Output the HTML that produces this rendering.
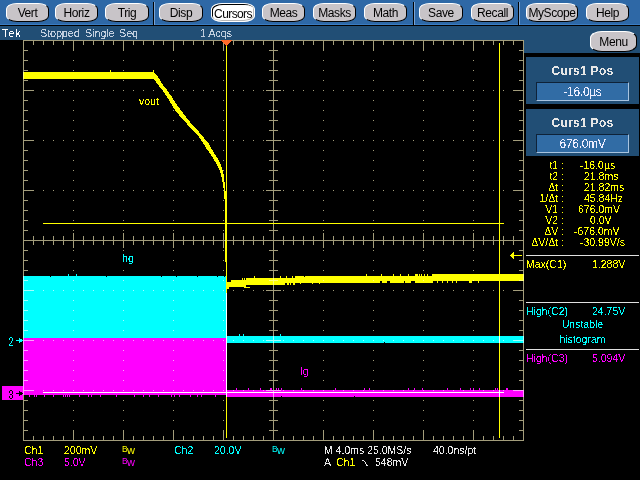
<!DOCTYPE html>
<html><head><meta charset="utf-8">
<style>
*{margin:0;padding:0;box-sizing:border-box}
html,body{width:640px;height:480px;overflow:hidden;background:#000}
body{position:relative;font-family:"Liberation Sans",sans-serif}
.a{position:absolute;white-space:nowrap}
#tb{position:absolute;left:0;top:0;width:640px;height:24px;background:#2e68a6}
#tbl{position:absolute;left:0;top:24px;width:640px;height:2px;border-top:1px solid #3a7cc2;background:#000}
#st{position:absolute;left:0;top:26px;width:640px;height:14px;background:#214e75}
#stR{position:absolute;left:524px;top:40px;width:116px;height:13px;background:#214e75}
.btn{position:absolute;top:3px;height:19px;background:#c8c4c8;border:1px solid;border-color:#fff #000 #000 #fff;border-radius:11px/6px;font-size:12px;color:#000;text-align:center;line-height:19px;letter-spacing:-0.4px}
.btn.sel{background:#fff;border-color:#fff;box-shadow:inset 1px 1px 0 #000, inset -1px -1px 0 #b8b8b8;line-height:21px;letter-spacing:-0.6px}
.t{}
.cr{filter:url(#crisp)}
.sep{position:absolute;top:2px;width:2px;height:23px;border-left:1px solid #000;background:#7aa4d4;border-bottom:0}
.panel{position:absolute;left:526px;width:113px;height:47px;background:#214e75}
.ptitle{filter:url(#crisp);position:absolute;left:0;width:113px;top:7px;text-align:center;font-weight:bold;font-size:12px;color:#e6e6e6;letter-spacing:0.3px}
.pbox{position:absolute;left:10px;top:25px;width:93px;height:19px;background:#316ca5;border:1px solid;border-color:#0e2238 #a8c4e0 #a8c4e0 #0e2238;color:#eef;font-size:12px;text-align:center;line-height:19px;letter-spacing:-0.3px}
.y{color:#ffff00} .c{color:#00ffff} .m{color:#ff00ff} .w{color:#e8e8e8}
.ro{font-size:10.5px;line-height:11px;filter:url(#crisp)}
.st{top:26px;font-size:11px;line-height:14px;color:#c0cede;letter-spacing:-0.2px;filter:url(#crisp)}
</style></head><body>
<svg width="0" height="0" style="position:absolute"><filter id="crisp" x="0" y="0" width="100%" height="100%"><feComponentTransfer><feFuncA type="discrete" tableValues="0 1"/></feComponentTransfer></filter></svg>
<div id="tb"></div><div id="tbl"></div><div id="st"></div><div id="stR"></div>
<div class="btn" style="left:6px;width:43px"><span class="t">Vert</span></div>
<div class="btn" style="left:55px;width:43px"><span class="t">Horiz</span></div>
<div class="btn" style="left:105px;width:44px"><span class="t">Trig</span></div>
<div class="sep" style="left:153px"></div>
<div class="btn" style="left:159px;width:44px"><span class="t">Disp</span></div>
<div class="btn sel" style="left:211px;width:44px"><span class="t">Cursors</span></div>
<div class="btn" style="left:262px;width:43px"><span class="t">Meas</span></div>
<div class="btn" style="left:313px;width:43px"><span class="t">Masks</span></div>
<div class="btn" style="left:364px;width:43px"><span class="t">Math</span></div>
<div class="sep" style="left:413px"></div>
<div class="btn" style="left:419px;width:44px"><span class="t">Save</span></div>
<div class="btn" style="left:471px;width:43px"><span class="t">Recall</span></div>
<div class="sep" style="left:518px"></div>
<div class="btn" style="left:526px;width:52px"><span class="t">MyScope</span></div>
<div class="btn" style="left:586px;width:43px"><span class="t">Help</span></div>
<div class="btn" style="left:590px;top:31px;width:47px;height:21px;line-height:21px;border-radius:12px/7px"><span class="t">Menu</span></div>

<div class="a" style="left:2px;top:26px;font-size:11px;line-height:14px;color:#fff;letter-spacing:0.8px;filter:url(#crisp)">Tek</div>
<div class="a st" style="left:40px">Stopped</div>
<div class="a st" style="left:85px">Single</div>
<div class="a st" style="left:119px">Seq</div>
<div class="a st" style="left:200px">1 Acqs</div>

<div class="panel" style="top:57px"><div class="ptitle">Curs1 Pos</div><div class="pbox"><span class="cr">-16.0µs</span></div></div>
<div class="panel" style="top:109px"><div class="ptitle">Curs1 Pos</div><div class="pbox"><span class="cr">676.0mV</span></div></div>

<svg class="a" style="left:0;top:0" width="640" height="480" shape-rendering="crispEdges">
 <g fill="#ffff00">
  <rect x="23" y="72" width="131" height="7"/>
  <polygon points="153,79 154,80 156,82 159,86 162.4,90 166.4,96 170.75,103 174.8,110 180.7,117 187,124 193.5,131 199.9,138 203.6,144 206.8,149 210.4,154 213.5,159 216.6,164 219.1,169 221,174 222,179 222.9,184 223.75,189 224.1,194 224.5,199 225,203 225,262 226,262 226,293 227,293 227,192 225.6,192 225.3,189 224.9,184 224.1,179 223.5,174 222.25,169 220.4,164 217.9,159 214.75,154 211.6,149 209.2,144 204,138 198.2,131 191.75,124 185.9,117 180.7,110 175.4,103 171.3,96 167,90 163,85 160,80 158,77 155.8,74 154,72 153,72"/>
  <rect x="153" y="70" width="1" height="2"/><rect x="110" y="70" width="1" height="2"/>
 </g>
 <rect x="23" y="276" width="203" height="62" fill="#00ffff"/>
 <rect x="226" y="293" width="1" height="45" fill="#00ffff"/>
 <rect x="226" y="336" width="298" height="7" fill="#00ffff"/>
 <rect x="23" y="338" width="204" height="57" fill="#ff00ff"/>
 <rect x="226" y="390" width="298" height="7" fill="#ff00ff"/>
 <g fill="#ffff00">
  <rect x="227" y="282" width="2" height="7"/>
  <rect x="229" y="282" width="2" height="5"/>
  <rect x="231" y="280" width="15" height="7"/><rect x="244" y="287" width="6" height="1"/><rect x="246" y="278" width="39" height="7"/><rect x="285" y="278" width="10" height="5"/><rect x="295" y="276" width="137" height="7"/><rect x="432" y="274" width="92" height="7"/>
<rect x="50" y="276" width="1" height="1" fill="#000"/>
<rect x="106" y="276" width="1" height="1" fill="#000"/>
<rect x="161" y="276" width="1" height="1" fill="#000"/>
<rect x="176" y="276" width="1" height="1" fill="#000"/>
<rect x="197" y="276" width="1" height="1" fill="#000"/>
<rect x="217" y="276" width="1" height="1" fill="#000"/>
<rect x="224" y="276" width="1" height="1" fill="#000"/>
<rect x="68" y="274" width="1" height="2" fill="#00ffff"/>
<rect x="76" y="274" width="1" height="2" fill="#00ffff"/>
<rect x="239" y="334" width="1" height="2" fill="#00ffff"/>
<rect x="243" y="334" width="1" height="2" fill="#00ffff"/>
<rect x="280" y="334" width="1" height="2" fill="#00ffff"/>
<rect x="384" y="342" width="1" height="1" fill="#000"/>
<rect x="29" y="395" width="1" height="2" fill="#ff00ff"/>
<rect x="34" y="395" width="1" height="2" fill="#ff00ff"/>
<rect x="36" y="395" width="1" height="2" fill="#ff00ff"/>
<rect x="44" y="395" width="1" height="2" fill="#ff00ff"/>
<rect x="53" y="395" width="1" height="2" fill="#ff00ff"/>
<rect x="63" y="395" width="1" height="2" fill="#ff00ff"/>
<rect x="65" y="395" width="1" height="2" fill="#ff00ff"/>
<rect x="67" y="395" width="1" height="2" fill="#ff00ff"/>
<rect x="69" y="395" width="1" height="2" fill="#ff00ff"/>
<rect x="79" y="395" width="1" height="2" fill="#ff00ff"/>
<rect x="88" y="395" width="1" height="2" fill="#ff00ff"/>
<rect x="91" y="395" width="1" height="2" fill="#ff00ff"/>
<rect x="100" y="395" width="1" height="2" fill="#ff00ff"/>
<rect x="116" y="395" width="1" height="2" fill="#ff00ff"/>
<rect x="134" y="395" width="1" height="2" fill="#ff00ff"/>
<rect x="143" y="395" width="1" height="2" fill="#ff00ff"/>
<rect x="149" y="395" width="1" height="2" fill="#ff00ff"/>
<rect x="158" y="395" width="1" height="2" fill="#ff00ff"/>
<rect x="171" y="395" width="1" height="2" fill="#ff00ff"/>
<rect x="174" y="395" width="1" height="2" fill="#ff00ff"/>
<rect x="179" y="395" width="1" height="2" fill="#ff00ff"/>
<rect x="190" y="395" width="1" height="2" fill="#ff00ff"/>
<rect x="197" y="395" width="1" height="2" fill="#ff00ff"/>
<rect x="201" y="395" width="1" height="2" fill="#ff00ff"/>
<rect x="215" y="395" width="1" height="2" fill="#ff00ff"/>
<rect x="236" y="388" width="1" height="2" fill="#ff00ff"/>
<rect x="248" y="388" width="1" height="2" fill="#ff00ff"/>
<rect x="260" y="388" width="1" height="2" fill="#ff00ff"/>
<rect x="270" y="388" width="1" height="2" fill="#ff00ff"/>
<rect x="271" y="388" width="1" height="2" fill="#ff00ff"/>
<rect x="276" y="388" width="1" height="2" fill="#ff00ff"/>
<rect x="278" y="388" width="1" height="2" fill="#ff00ff"/>
<rect x="281" y="388" width="1" height="2" fill="#ff00ff"/>
<rect x="301" y="388" width="1" height="2" fill="#ff00ff"/>
<rect x="335" y="388" width="1" height="2" fill="#ff00ff"/>
<rect x="364" y="388" width="1" height="2" fill="#ff00ff"/>
<rect x="369" y="388" width="1" height="2" fill="#ff00ff"/>
<rect x="408" y="388" width="1" height="2" fill="#ff00ff"/>
<rect x="414" y="388" width="1" height="2" fill="#ff00ff"/>
<rect x="422" y="388" width="1" height="2" fill="#ff00ff"/>
<rect x="447" y="388" width="1" height="2" fill="#ff00ff"/>
<rect x="460" y="388" width="1" height="2" fill="#ff00ff"/>
<rect x="470" y="388" width="1" height="2" fill="#ff00ff"/>
<rect x="473" y="388" width="1" height="2" fill="#ff00ff"/>
<rect x="479" y="388" width="1" height="2" fill="#ff00ff"/>
<rect x="495" y="388" width="1" height="2" fill="#ff00ff"/>
<rect x="497" y="388" width="1" height="2" fill="#ff00ff"/>
<rect x="506" y="388" width="1" height="2" fill="#ff00ff"/>
<rect x="507" y="388" width="1" height="2" fill="#ff00ff"/>
<rect x="281" y="396" width="1" height="1" fill="#000"/>
<rect x="354" y="396" width="1" height="1" fill="#000"/>
<rect x="242" y="278" width="1" height="2" fill="#ffff00"/>
<rect x="244" y="278" width="1" height="2" fill="#ffff00"/>
<rect x="254" y="276" width="1" height="2" fill="#ffff00"/>
<rect x="280" y="276" width="1" height="2" fill="#ffff00"/>
<rect x="286" y="276" width="1" height="2" fill="#ffff00"/>
<rect x="292" y="276" width="1" height="2" fill="#ffff00"/>
<rect x="366" y="274" width="1" height="2" fill="#ffff00"/>
<rect x="381" y="274" width="1" height="2" fill="#ffff00"/>
<rect x="393" y="274" width="1" height="2" fill="#ffff00"/>
<rect x="400" y="274" width="1" height="2" fill="#ffff00"/>
<rect x="408" y="274" width="1" height="2" fill="#ffff00"/>
<rect x="415" y="274" width="1" height="2" fill="#ffff00"/>
<rect x="417" y="274" width="1" height="2" fill="#ffff00"/>
<rect x="416" y="274" width="1" height="2" fill="#ffff00"/>
<rect x="419" y="274" width="1" height="2" fill="#ffff00"/>
<rect x="421" y="274" width="1" height="2" fill="#ffff00"/>
<rect x="424" y="274" width="1" height="2" fill="#ffff00"/>
<rect x="427" y="274" width="1" height="2" fill="#ffff00"/>
<rect x="304" y="276" width="1" height="1" fill="#000"/>
<rect x="287" y="283" width="1" height="2" fill="#ffff00"/>
<rect x="288" y="283" width="1" height="2" fill="#ffff00"/>
<rect x="290" y="283" width="1" height="2" fill="#ffff00"/>
<rect x="293" y="283" width="1" height="2" fill="#ffff00"/>
<rect x="294" y="283" width="1" height="2" fill="#ffff00"/>
<rect x="300" y="283" width="1" height="1" fill="#ffff00"/>
<rect x="312" y="283" width="1" height="1" fill="#ffff00"/>
<rect x="319" y="283" width="1" height="1" fill="#ffff00"/>
<rect x="380" y="281" width="1" height="2" fill="#000"/>
<rect x="381" y="281" width="1" height="2" fill="#000"/>
<rect x="387" y="281" width="1" height="2" fill="#000"/>
<rect x="388" y="281" width="1" height="2" fill="#000"/>
<rect x="389" y="281" width="1" height="2" fill="#000"/>
<rect x="404" y="281" width="1" height="2" fill="#000"/>
<rect x="411" y="281" width="1" height="2" fill="#000"/>
<rect x="412" y="281" width="1" height="2" fill="#000"/>
<rect x="413" y="281" width="1" height="2" fill="#000"/>
<rect x="414" y="281" width="1" height="2" fill="#000"/>
<rect x="420" y="281" width="1" height="2" fill="#ffff00"/>
<rect x="424" y="281" width="1" height="2" fill="#ffff00"/>
<rect x="428" y="281" width="1" height="2" fill="#ffff00"/>
<rect x="432" y="281" width="1" height="2" fill="#ffff00"/>
<rect x="437" y="281" width="1" height="2" fill="#ffff00"/>
<rect x="442" y="281" width="1" height="2" fill="#ffff00"/>
<rect x="447" y="281" width="1" height="2" fill="#ffff00"/>
<rect x="452" y="281" width="1" height="2" fill="#ffff00"/>
<rect x="456" y="281" width="1" height="2" fill="#ffff00"/>
<rect x="469" y="281" width="1" height="2" fill="#ffff00"/>
<rect x="470" y="281" width="1" height="2" fill="#ffff00"/>
<rect x="471" y="281" width="1" height="2" fill="#ffff00"/>
<rect x="478" y="281" width="1" height="2" fill="#ffff00"/>
 </g>
</svg>
<svg class="a" style="left:0;top:0;mix-blend-mode:screen" width="640" height="480" shape-rendering="crispEdges">
 <g fill="#a39d7b">
<rect x="23" y="40" width="501" height="1"/>
<rect x="23" y="440" width="501" height="1"/>
<rect x="23" y="40" width="1" height="401"/>
<rect x="523" y="40" width="1" height="401"/>
<rect x="273" y="40" width="1" height="401"/>
<rect x="23" y="240" width="501" height="1"/>
<rect x="33" y="40" width="1" height="5"/>
<rect x="33" y="436" width="1" height="5"/>
<rect x="33" y="236" width="1" height="9"/>
<rect x="43" y="40" width="1" height="5"/>
<rect x="43" y="436" width="1" height="5"/>
<rect x="43" y="236" width="1" height="9"/>
<rect x="53" y="40" width="1" height="5"/>
<rect x="53" y="436" width="1" height="5"/>
<rect x="53" y="236" width="1" height="9"/>
<rect x="63" y="40" width="1" height="5"/>
<rect x="63" y="436" width="1" height="5"/>
<rect x="63" y="236" width="1" height="9"/>
<rect x="73" y="40" width="1" height="11"/>
<rect x="73" y="430" width="1" height="11"/>
<rect x="73" y="233" width="1" height="15"/>
<rect x="83" y="40" width="1" height="5"/>
<rect x="83" y="436" width="1" height="5"/>
<rect x="83" y="236" width="1" height="9"/>
<rect x="93" y="40" width="1" height="5"/>
<rect x="93" y="436" width="1" height="5"/>
<rect x="93" y="236" width="1" height="9"/>
<rect x="103" y="40" width="1" height="5"/>
<rect x="103" y="436" width="1" height="5"/>
<rect x="103" y="236" width="1" height="9"/>
<rect x="113" y="40" width="1" height="5"/>
<rect x="113" y="436" width="1" height="5"/>
<rect x="113" y="236" width="1" height="9"/>
<rect x="123" y="40" width="1" height="11"/>
<rect x="123" y="430" width="1" height="11"/>
<rect x="123" y="233" width="1" height="15"/>
<rect x="133" y="40" width="1" height="5"/>
<rect x="133" y="436" width="1" height="5"/>
<rect x="133" y="236" width="1" height="9"/>
<rect x="143" y="40" width="1" height="5"/>
<rect x="143" y="436" width="1" height="5"/>
<rect x="143" y="236" width="1" height="9"/>
<rect x="153" y="40" width="1" height="5"/>
<rect x="153" y="436" width="1" height="5"/>
<rect x="153" y="236" width="1" height="9"/>
<rect x="163" y="40" width="1" height="5"/>
<rect x="163" y="436" width="1" height="5"/>
<rect x="163" y="236" width="1" height="9"/>
<rect x="173" y="40" width="1" height="11"/>
<rect x="173" y="430" width="1" height="11"/>
<rect x="173" y="233" width="1" height="15"/>
<rect x="183" y="40" width="1" height="5"/>
<rect x="183" y="436" width="1" height="5"/>
<rect x="183" y="236" width="1" height="9"/>
<rect x="193" y="40" width="1" height="5"/>
<rect x="193" y="436" width="1" height="5"/>
<rect x="193" y="236" width="1" height="9"/>
<rect x="203" y="40" width="1" height="5"/>
<rect x="203" y="436" width="1" height="5"/>
<rect x="203" y="236" width="1" height="9"/>
<rect x="213" y="40" width="1" height="5"/>
<rect x="213" y="436" width="1" height="5"/>
<rect x="213" y="236" width="1" height="9"/>
<rect x="223" y="40" width="1" height="11"/>
<rect x="223" y="430" width="1" height="11"/>
<rect x="223" y="233" width="1" height="15"/>
<rect x="233" y="40" width="1" height="5"/>
<rect x="233" y="436" width="1" height="5"/>
<rect x="233" y="236" width="1" height="9"/>
<rect x="243" y="40" width="1" height="5"/>
<rect x="243" y="436" width="1" height="5"/>
<rect x="243" y="236" width="1" height="9"/>
<rect x="253" y="40" width="1" height="5"/>
<rect x="253" y="436" width="1" height="5"/>
<rect x="253" y="236" width="1" height="9"/>
<rect x="263" y="40" width="1" height="5"/>
<rect x="263" y="436" width="1" height="5"/>
<rect x="263" y="236" width="1" height="9"/>
<rect x="283" y="40" width="1" height="5"/>
<rect x="283" y="436" width="1" height="5"/>
<rect x="283" y="236" width="1" height="9"/>
<rect x="293" y="40" width="1" height="5"/>
<rect x="293" y="436" width="1" height="5"/>
<rect x="293" y="236" width="1" height="9"/>
<rect x="303" y="40" width="1" height="5"/>
<rect x="303" y="436" width="1" height="5"/>
<rect x="303" y="236" width="1" height="9"/>
<rect x="313" y="40" width="1" height="5"/>
<rect x="313" y="436" width="1" height="5"/>
<rect x="313" y="236" width="1" height="9"/>
<rect x="323" y="40" width="1" height="11"/>
<rect x="323" y="430" width="1" height="11"/>
<rect x="323" y="233" width="1" height="15"/>
<rect x="333" y="40" width="1" height="5"/>
<rect x="333" y="436" width="1" height="5"/>
<rect x="333" y="236" width="1" height="9"/>
<rect x="343" y="40" width="1" height="5"/>
<rect x="343" y="436" width="1" height="5"/>
<rect x="343" y="236" width="1" height="9"/>
<rect x="353" y="40" width="1" height="5"/>
<rect x="353" y="436" width="1" height="5"/>
<rect x="353" y="236" width="1" height="9"/>
<rect x="363" y="40" width="1" height="5"/>
<rect x="363" y="436" width="1" height="5"/>
<rect x="363" y="236" width="1" height="9"/>
<rect x="373" y="40" width="1" height="11"/>
<rect x="373" y="430" width="1" height="11"/>
<rect x="373" y="233" width="1" height="15"/>
<rect x="383" y="40" width="1" height="5"/>
<rect x="383" y="436" width="1" height="5"/>
<rect x="383" y="236" width="1" height="9"/>
<rect x="393" y="40" width="1" height="5"/>
<rect x="393" y="436" width="1" height="5"/>
<rect x="393" y="236" width="1" height="9"/>
<rect x="403" y="40" width="1" height="5"/>
<rect x="403" y="436" width="1" height="5"/>
<rect x="403" y="236" width="1" height="9"/>
<rect x="413" y="40" width="1" height="5"/>
<rect x="413" y="436" width="1" height="5"/>
<rect x="413" y="236" width="1" height="9"/>
<rect x="423" y="40" width="1" height="11"/>
<rect x="423" y="430" width="1" height="11"/>
<rect x="423" y="233" width="1" height="15"/>
<rect x="433" y="40" width="1" height="5"/>
<rect x="433" y="436" width="1" height="5"/>
<rect x="433" y="236" width="1" height="9"/>
<rect x="443" y="40" width="1" height="5"/>
<rect x="443" y="436" width="1" height="5"/>
<rect x="443" y="236" width="1" height="9"/>
<rect x="453" y="40" width="1" height="5"/>
<rect x="453" y="436" width="1" height="5"/>
<rect x="453" y="236" width="1" height="9"/>
<rect x="463" y="40" width="1" height="5"/>
<rect x="463" y="436" width="1" height="5"/>
<rect x="463" y="236" width="1" height="9"/>
<rect x="473" y="40" width="1" height="11"/>
<rect x="473" y="430" width="1" height="11"/>
<rect x="473" y="233" width="1" height="15"/>
<rect x="483" y="40" width="1" height="5"/>
<rect x="483" y="436" width="1" height="5"/>
<rect x="483" y="236" width="1" height="9"/>
<rect x="493" y="40" width="1" height="5"/>
<rect x="493" y="436" width="1" height="5"/>
<rect x="493" y="236" width="1" height="9"/>
<rect x="503" y="40" width="1" height="5"/>
<rect x="503" y="436" width="1" height="5"/>
<rect x="503" y="236" width="1" height="9"/>
<rect x="513" y="40" width="1" height="5"/>
<rect x="513" y="436" width="1" height="5"/>
<rect x="513" y="236" width="1" height="9"/>
<rect x="23" y="50" width="5" height="1"/>
<rect x="519" y="50" width="5" height="1"/>
<rect x="269" y="50" width="9" height="1"/>
<rect x="23" y="60" width="5" height="1"/>
<rect x="519" y="60" width="5" height="1"/>
<rect x="269" y="60" width="9" height="1"/>
<rect x="23" y="70" width="5" height="1"/>
<rect x="519" y="70" width="5" height="1"/>
<rect x="269" y="70" width="9" height="1"/>
<rect x="23" y="80" width="5" height="1"/>
<rect x="519" y="80" width="5" height="1"/>
<rect x="269" y="80" width="9" height="1"/>
<rect x="23" y="90" width="11" height="1"/>
<rect x="513" y="90" width="11" height="1"/>
<rect x="266" y="90" width="15" height="1"/>
<rect x="23" y="100" width="5" height="1"/>
<rect x="519" y="100" width="5" height="1"/>
<rect x="269" y="100" width="9" height="1"/>
<rect x="23" y="110" width="5" height="1"/>
<rect x="519" y="110" width="5" height="1"/>
<rect x="269" y="110" width="9" height="1"/>
<rect x="23" y="120" width="5" height="1"/>
<rect x="519" y="120" width="5" height="1"/>
<rect x="269" y="120" width="9" height="1"/>
<rect x="23" y="130" width="5" height="1"/>
<rect x="519" y="130" width="5" height="1"/>
<rect x="269" y="130" width="9" height="1"/>
<rect x="23" y="140" width="11" height="1"/>
<rect x="513" y="140" width="11" height="1"/>
<rect x="266" y="140" width="15" height="1"/>
<rect x="23" y="150" width="5" height="1"/>
<rect x="519" y="150" width="5" height="1"/>
<rect x="269" y="150" width="9" height="1"/>
<rect x="23" y="160" width="5" height="1"/>
<rect x="519" y="160" width="5" height="1"/>
<rect x="269" y="160" width="9" height="1"/>
<rect x="23" y="170" width="5" height="1"/>
<rect x="519" y="170" width="5" height="1"/>
<rect x="269" y="170" width="9" height="1"/>
<rect x="23" y="180" width="5" height="1"/>
<rect x="519" y="180" width="5" height="1"/>
<rect x="269" y="180" width="9" height="1"/>
<rect x="23" y="190" width="11" height="1"/>
<rect x="513" y="190" width="11" height="1"/>
<rect x="266" y="190" width="15" height="1"/>
<rect x="23" y="200" width="5" height="1"/>
<rect x="519" y="200" width="5" height="1"/>
<rect x="269" y="200" width="9" height="1"/>
<rect x="23" y="210" width="5" height="1"/>
<rect x="519" y="210" width="5" height="1"/>
<rect x="269" y="210" width="9" height="1"/>
<rect x="23" y="220" width="5" height="1"/>
<rect x="519" y="220" width="5" height="1"/>
<rect x="269" y="220" width="9" height="1"/>
<rect x="23" y="230" width="5" height="1"/>
<rect x="519" y="230" width="5" height="1"/>
<rect x="269" y="230" width="9" height="1"/>
<rect x="23" y="250" width="5" height="1"/>
<rect x="519" y="250" width="5" height="1"/>
<rect x="269" y="250" width="9" height="1"/>
<rect x="23" y="260" width="5" height="1"/>
<rect x="519" y="260" width="5" height="1"/>
<rect x="269" y="260" width="9" height="1"/>
<rect x="23" y="270" width="5" height="1"/>
<rect x="519" y="270" width="5" height="1"/>
<rect x="269" y="270" width="9" height="1"/>
<rect x="23" y="280" width="5" height="1"/>
<rect x="519" y="280" width="5" height="1"/>
<rect x="269" y="280" width="9" height="1"/>
<rect x="23" y="290" width="11" height="1"/>
<rect x="513" y="290" width="11" height="1"/>
<rect x="266" y="290" width="15" height="1"/>
<rect x="23" y="300" width="5" height="1"/>
<rect x="519" y="300" width="5" height="1"/>
<rect x="269" y="300" width="9" height="1"/>
<rect x="23" y="310" width="5" height="1"/>
<rect x="519" y="310" width="5" height="1"/>
<rect x="269" y="310" width="9" height="1"/>
<rect x="23" y="320" width="5" height="1"/>
<rect x="519" y="320" width="5" height="1"/>
<rect x="269" y="320" width="9" height="1"/>
<rect x="23" y="330" width="5" height="1"/>
<rect x="519" y="330" width="5" height="1"/>
<rect x="269" y="330" width="9" height="1"/>
<rect x="23" y="340" width="11" height="1"/>
<rect x="513" y="340" width="11" height="1"/>
<rect x="266" y="340" width="15" height="1"/>
<rect x="23" y="350" width="5" height="1"/>
<rect x="519" y="350" width="5" height="1"/>
<rect x="269" y="350" width="9" height="1"/>
<rect x="23" y="360" width="5" height="1"/>
<rect x="519" y="360" width="5" height="1"/>
<rect x="269" y="360" width="9" height="1"/>
<rect x="23" y="370" width="5" height="1"/>
<rect x="519" y="370" width="5" height="1"/>
<rect x="269" y="370" width="9" height="1"/>
<rect x="23" y="380" width="5" height="1"/>
<rect x="519" y="380" width="5" height="1"/>
<rect x="269" y="380" width="9" height="1"/>
<rect x="23" y="390" width="11" height="1"/>
<rect x="513" y="390" width="11" height="1"/>
<rect x="266" y="390" width="15" height="1"/>
<rect x="23" y="400" width="5" height="1"/>
<rect x="519" y="400" width="5" height="1"/>
<rect x="269" y="400" width="9" height="1"/>
<rect x="23" y="410" width="5" height="1"/>
<rect x="519" y="410" width="5" height="1"/>
<rect x="269" y="410" width="9" height="1"/>
<rect x="23" y="420" width="5" height="1"/>
<rect x="519" y="420" width="5" height="1"/>
<rect x="269" y="420" width="9" height="1"/>
<rect x="23" y="430" width="5" height="1"/>
<rect x="519" y="430" width="5" height="1"/>
<rect x="269" y="430" width="9" height="1"/>
<rect x="73" y="50" width="1" height="1"/>
<rect x="73" y="60" width="1" height="1"/>
<rect x="73" y="70" width="1" height="1"/>
<rect x="73" y="80" width="1" height="1"/>
<rect x="73" y="100" width="1" height="1"/>
<rect x="73" y="110" width="1" height="1"/>
<rect x="73" y="120" width="1" height="1"/>
<rect x="73" y="130" width="1" height="1"/>
<rect x="73" y="150" width="1" height="1"/>
<rect x="73" y="160" width="1" height="1"/>
<rect x="73" y="170" width="1" height="1"/>
<rect x="73" y="180" width="1" height="1"/>
<rect x="73" y="200" width="1" height="1"/>
<rect x="73" y="210" width="1" height="1"/>
<rect x="73" y="220" width="1" height="1"/>
<rect x="73" y="230" width="1" height="1"/>
<rect x="73" y="250" width="1" height="1"/>
<rect x="73" y="260" width="1" height="1"/>
<rect x="73" y="270" width="1" height="1"/>
<rect x="73" y="280" width="1" height="1"/>
<rect x="73" y="300" width="1" height="1"/>
<rect x="73" y="310" width="1" height="1"/>
<rect x="73" y="320" width="1" height="1"/>
<rect x="73" y="330" width="1" height="1"/>
<rect x="73" y="350" width="1" height="1"/>
<rect x="73" y="360" width="1" height="1"/>
<rect x="73" y="370" width="1" height="1"/>
<rect x="73" y="380" width="1" height="1"/>
<rect x="73" y="400" width="1" height="1"/>
<rect x="73" y="410" width="1" height="1"/>
<rect x="73" y="420" width="1" height="1"/>
<rect x="73" y="430" width="1" height="1"/>
<rect x="123" y="50" width="1" height="1"/>
<rect x="123" y="60" width="1" height="1"/>
<rect x="123" y="70" width="1" height="1"/>
<rect x="123" y="80" width="1" height="1"/>
<rect x="123" y="100" width="1" height="1"/>
<rect x="123" y="110" width="1" height="1"/>
<rect x="123" y="120" width="1" height="1"/>
<rect x="123" y="130" width="1" height="1"/>
<rect x="123" y="150" width="1" height="1"/>
<rect x="123" y="160" width="1" height="1"/>
<rect x="123" y="170" width="1" height="1"/>
<rect x="123" y="180" width="1" height="1"/>
<rect x="123" y="200" width="1" height="1"/>
<rect x="123" y="210" width="1" height="1"/>
<rect x="123" y="220" width="1" height="1"/>
<rect x="123" y="230" width="1" height="1"/>
<rect x="123" y="250" width="1" height="1"/>
<rect x="123" y="260" width="1" height="1"/>
<rect x="123" y="270" width="1" height="1"/>
<rect x="123" y="280" width="1" height="1"/>
<rect x="123" y="300" width="1" height="1"/>
<rect x="123" y="310" width="1" height="1"/>
<rect x="123" y="320" width="1" height="1"/>
<rect x="123" y="330" width="1" height="1"/>
<rect x="123" y="350" width="1" height="1"/>
<rect x="123" y="360" width="1" height="1"/>
<rect x="123" y="370" width="1" height="1"/>
<rect x="123" y="380" width="1" height="1"/>
<rect x="123" y="400" width="1" height="1"/>
<rect x="123" y="410" width="1" height="1"/>
<rect x="123" y="420" width="1" height="1"/>
<rect x="123" y="430" width="1" height="1"/>
<rect x="173" y="50" width="1" height="1"/>
<rect x="173" y="60" width="1" height="1"/>
<rect x="173" y="70" width="1" height="1"/>
<rect x="173" y="80" width="1" height="1"/>
<rect x="173" y="100" width="1" height="1"/>
<rect x="173" y="110" width="1" height="1"/>
<rect x="173" y="120" width="1" height="1"/>
<rect x="173" y="130" width="1" height="1"/>
<rect x="173" y="150" width="1" height="1"/>
<rect x="173" y="160" width="1" height="1"/>
<rect x="173" y="170" width="1" height="1"/>
<rect x="173" y="180" width="1" height="1"/>
<rect x="173" y="200" width="1" height="1"/>
<rect x="173" y="210" width="1" height="1"/>
<rect x="173" y="220" width="1" height="1"/>
<rect x="173" y="230" width="1" height="1"/>
<rect x="173" y="250" width="1" height="1"/>
<rect x="173" y="260" width="1" height="1"/>
<rect x="173" y="270" width="1" height="1"/>
<rect x="173" y="280" width="1" height="1"/>
<rect x="173" y="300" width="1" height="1"/>
<rect x="173" y="310" width="1" height="1"/>
<rect x="173" y="320" width="1" height="1"/>
<rect x="173" y="330" width="1" height="1"/>
<rect x="173" y="350" width="1" height="1"/>
<rect x="173" y="360" width="1" height="1"/>
<rect x="173" y="370" width="1" height="1"/>
<rect x="173" y="380" width="1" height="1"/>
<rect x="173" y="400" width="1" height="1"/>
<rect x="173" y="410" width="1" height="1"/>
<rect x="173" y="420" width="1" height="1"/>
<rect x="173" y="430" width="1" height="1"/>
<rect x="223" y="50" width="1" height="1"/>
<rect x="223" y="60" width="1" height="1"/>
<rect x="223" y="70" width="1" height="1"/>
<rect x="223" y="80" width="1" height="1"/>
<rect x="223" y="100" width="1" height="1"/>
<rect x="223" y="110" width="1" height="1"/>
<rect x="223" y="120" width="1" height="1"/>
<rect x="223" y="130" width="1" height="1"/>
<rect x="223" y="150" width="1" height="1"/>
<rect x="223" y="160" width="1" height="1"/>
<rect x="223" y="170" width="1" height="1"/>
<rect x="223" y="180" width="1" height="1"/>
<rect x="223" y="200" width="1" height="1"/>
<rect x="223" y="210" width="1" height="1"/>
<rect x="223" y="220" width="1" height="1"/>
<rect x="223" y="230" width="1" height="1"/>
<rect x="223" y="250" width="1" height="1"/>
<rect x="223" y="260" width="1" height="1"/>
<rect x="223" y="270" width="1" height="1"/>
<rect x="223" y="280" width="1" height="1"/>
<rect x="223" y="300" width="1" height="1"/>
<rect x="223" y="310" width="1" height="1"/>
<rect x="223" y="320" width="1" height="1"/>
<rect x="223" y="330" width="1" height="1"/>
<rect x="223" y="350" width="1" height="1"/>
<rect x="223" y="360" width="1" height="1"/>
<rect x="223" y="370" width="1" height="1"/>
<rect x="223" y="380" width="1" height="1"/>
<rect x="223" y="400" width="1" height="1"/>
<rect x="223" y="410" width="1" height="1"/>
<rect x="223" y="420" width="1" height="1"/>
<rect x="223" y="430" width="1" height="1"/>
<rect x="323" y="50" width="1" height="1"/>
<rect x="323" y="60" width="1" height="1"/>
<rect x="323" y="70" width="1" height="1"/>
<rect x="323" y="80" width="1" height="1"/>
<rect x="323" y="100" width="1" height="1"/>
<rect x="323" y="110" width="1" height="1"/>
<rect x="323" y="120" width="1" height="1"/>
<rect x="323" y="130" width="1" height="1"/>
<rect x="323" y="150" width="1" height="1"/>
<rect x="323" y="160" width="1" height="1"/>
<rect x="323" y="170" width="1" height="1"/>
<rect x="323" y="180" width="1" height="1"/>
<rect x="323" y="200" width="1" height="1"/>
<rect x="323" y="210" width="1" height="1"/>
<rect x="323" y="220" width="1" height="1"/>
<rect x="323" y="230" width="1" height="1"/>
<rect x="323" y="250" width="1" height="1"/>
<rect x="323" y="260" width="1" height="1"/>
<rect x="323" y="270" width="1" height="1"/>
<rect x="323" y="280" width="1" height="1"/>
<rect x="323" y="300" width="1" height="1"/>
<rect x="323" y="310" width="1" height="1"/>
<rect x="323" y="320" width="1" height="1"/>
<rect x="323" y="330" width="1" height="1"/>
<rect x="323" y="350" width="1" height="1"/>
<rect x="323" y="360" width="1" height="1"/>
<rect x="323" y="370" width="1" height="1"/>
<rect x="323" y="380" width="1" height="1"/>
<rect x="323" y="400" width="1" height="1"/>
<rect x="323" y="410" width="1" height="1"/>
<rect x="323" y="420" width="1" height="1"/>
<rect x="323" y="430" width="1" height="1"/>
<rect x="373" y="50" width="1" height="1"/>
<rect x="373" y="60" width="1" height="1"/>
<rect x="373" y="70" width="1" height="1"/>
<rect x="373" y="80" width="1" height="1"/>
<rect x="373" y="100" width="1" height="1"/>
<rect x="373" y="110" width="1" height="1"/>
<rect x="373" y="120" width="1" height="1"/>
<rect x="373" y="130" width="1" height="1"/>
<rect x="373" y="150" width="1" height="1"/>
<rect x="373" y="160" width="1" height="1"/>
<rect x="373" y="170" width="1" height="1"/>
<rect x="373" y="180" width="1" height="1"/>
<rect x="373" y="200" width="1" height="1"/>
<rect x="373" y="210" width="1" height="1"/>
<rect x="373" y="220" width="1" height="1"/>
<rect x="373" y="230" width="1" height="1"/>
<rect x="373" y="250" width="1" height="1"/>
<rect x="373" y="260" width="1" height="1"/>
<rect x="373" y="270" width="1" height="1"/>
<rect x="373" y="280" width="1" height="1"/>
<rect x="373" y="300" width="1" height="1"/>
<rect x="373" y="310" width="1" height="1"/>
<rect x="373" y="320" width="1" height="1"/>
<rect x="373" y="330" width="1" height="1"/>
<rect x="373" y="350" width="1" height="1"/>
<rect x="373" y="360" width="1" height="1"/>
<rect x="373" y="370" width="1" height="1"/>
<rect x="373" y="380" width="1" height="1"/>
<rect x="373" y="400" width="1" height="1"/>
<rect x="373" y="410" width="1" height="1"/>
<rect x="373" y="420" width="1" height="1"/>
<rect x="373" y="430" width="1" height="1"/>
<rect x="423" y="50" width="1" height="1"/>
<rect x="423" y="60" width="1" height="1"/>
<rect x="423" y="70" width="1" height="1"/>
<rect x="423" y="80" width="1" height="1"/>
<rect x="423" y="100" width="1" height="1"/>
<rect x="423" y="110" width="1" height="1"/>
<rect x="423" y="120" width="1" height="1"/>
<rect x="423" y="130" width="1" height="1"/>
<rect x="423" y="150" width="1" height="1"/>
<rect x="423" y="160" width="1" height="1"/>
<rect x="423" y="170" width="1" height="1"/>
<rect x="423" y="180" width="1" height="1"/>
<rect x="423" y="200" width="1" height="1"/>
<rect x="423" y="210" width="1" height="1"/>
<rect x="423" y="220" width="1" height="1"/>
<rect x="423" y="230" width="1" height="1"/>
<rect x="423" y="250" width="1" height="1"/>
<rect x="423" y="260" width="1" height="1"/>
<rect x="423" y="270" width="1" height="1"/>
<rect x="423" y="280" width="1" height="1"/>
<rect x="423" y="300" width="1" height="1"/>
<rect x="423" y="310" width="1" height="1"/>
<rect x="423" y="320" width="1" height="1"/>
<rect x="423" y="330" width="1" height="1"/>
<rect x="423" y="350" width="1" height="1"/>
<rect x="423" y="360" width="1" height="1"/>
<rect x="423" y="370" width="1" height="1"/>
<rect x="423" y="380" width="1" height="1"/>
<rect x="423" y="400" width="1" height="1"/>
<rect x="423" y="410" width="1" height="1"/>
<rect x="423" y="420" width="1" height="1"/>
<rect x="423" y="430" width="1" height="1"/>
<rect x="473" y="50" width="1" height="1"/>
<rect x="473" y="60" width="1" height="1"/>
<rect x="473" y="70" width="1" height="1"/>
<rect x="473" y="80" width="1" height="1"/>
<rect x="473" y="100" width="1" height="1"/>
<rect x="473" y="110" width="1" height="1"/>
<rect x="473" y="120" width="1" height="1"/>
<rect x="473" y="130" width="1" height="1"/>
<rect x="473" y="150" width="1" height="1"/>
<rect x="473" y="160" width="1" height="1"/>
<rect x="473" y="170" width="1" height="1"/>
<rect x="473" y="180" width="1" height="1"/>
<rect x="473" y="200" width="1" height="1"/>
<rect x="473" y="210" width="1" height="1"/>
<rect x="473" y="220" width="1" height="1"/>
<rect x="473" y="230" width="1" height="1"/>
<rect x="473" y="250" width="1" height="1"/>
<rect x="473" y="260" width="1" height="1"/>
<rect x="473" y="270" width="1" height="1"/>
<rect x="473" y="280" width="1" height="1"/>
<rect x="473" y="300" width="1" height="1"/>
<rect x="473" y="310" width="1" height="1"/>
<rect x="473" y="320" width="1" height="1"/>
<rect x="473" y="330" width="1" height="1"/>
<rect x="473" y="350" width="1" height="1"/>
<rect x="473" y="360" width="1" height="1"/>
<rect x="473" y="370" width="1" height="1"/>
<rect x="473" y="380" width="1" height="1"/>
<rect x="473" y="400" width="1" height="1"/>
<rect x="473" y="410" width="1" height="1"/>
<rect x="473" y="420" width="1" height="1"/>
<rect x="473" y="430" width="1" height="1"/>
<rect x="33" y="90" width="1" height="1"/>
<rect x="43" y="90" width="1" height="1"/>
<rect x="53" y="90" width="1" height="1"/>
<rect x="63" y="90" width="1" height="1"/>
<rect x="73" y="90" width="1" height="1"/>
<rect x="83" y="90" width="1" height="1"/>
<rect x="93" y="90" width="1" height="1"/>
<rect x="103" y="90" width="1" height="1"/>
<rect x="113" y="90" width="1" height="1"/>
<rect x="123" y="90" width="1" height="1"/>
<rect x="133" y="90" width="1" height="1"/>
<rect x="143" y="90" width="1" height="1"/>
<rect x="153" y="90" width="1" height="1"/>
<rect x="163" y="90" width="1" height="1"/>
<rect x="173" y="90" width="1" height="1"/>
<rect x="183" y="90" width="1" height="1"/>
<rect x="193" y="90" width="1" height="1"/>
<rect x="203" y="90" width="1" height="1"/>
<rect x="213" y="90" width="1" height="1"/>
<rect x="223" y="90" width="1" height="1"/>
<rect x="233" y="90" width="1" height="1"/>
<rect x="243" y="90" width="1" height="1"/>
<rect x="253" y="90" width="1" height="1"/>
<rect x="263" y="90" width="1" height="1"/>
<rect x="283" y="90" width="1" height="1"/>
<rect x="293" y="90" width="1" height="1"/>
<rect x="303" y="90" width="1" height="1"/>
<rect x="313" y="90" width="1" height="1"/>
<rect x="323" y="90" width="1" height="1"/>
<rect x="333" y="90" width="1" height="1"/>
<rect x="343" y="90" width="1" height="1"/>
<rect x="353" y="90" width="1" height="1"/>
<rect x="363" y="90" width="1" height="1"/>
<rect x="373" y="90" width="1" height="1"/>
<rect x="383" y="90" width="1" height="1"/>
<rect x="393" y="90" width="1" height="1"/>
<rect x="403" y="90" width="1" height="1"/>
<rect x="413" y="90" width="1" height="1"/>
<rect x="423" y="90" width="1" height="1"/>
<rect x="433" y="90" width="1" height="1"/>
<rect x="443" y="90" width="1" height="1"/>
<rect x="453" y="90" width="1" height="1"/>
<rect x="463" y="90" width="1" height="1"/>
<rect x="473" y="90" width="1" height="1"/>
<rect x="483" y="90" width="1" height="1"/>
<rect x="493" y="90" width="1" height="1"/>
<rect x="503" y="90" width="1" height="1"/>
<rect x="513" y="90" width="1" height="1"/>
<rect x="33" y="140" width="1" height="1"/>
<rect x="43" y="140" width="1" height="1"/>
<rect x="53" y="140" width="1" height="1"/>
<rect x="63" y="140" width="1" height="1"/>
<rect x="73" y="140" width="1" height="1"/>
<rect x="83" y="140" width="1" height="1"/>
<rect x="93" y="140" width="1" height="1"/>
<rect x="103" y="140" width="1" height="1"/>
<rect x="113" y="140" width="1" height="1"/>
<rect x="123" y="140" width="1" height="1"/>
<rect x="133" y="140" width="1" height="1"/>
<rect x="143" y="140" width="1" height="1"/>
<rect x="153" y="140" width="1" height="1"/>
<rect x="163" y="140" width="1" height="1"/>
<rect x="173" y="140" width="1" height="1"/>
<rect x="183" y="140" width="1" height="1"/>
<rect x="193" y="140" width="1" height="1"/>
<rect x="203" y="140" width="1" height="1"/>
<rect x="213" y="140" width="1" height="1"/>
<rect x="223" y="140" width="1" height="1"/>
<rect x="233" y="140" width="1" height="1"/>
<rect x="243" y="140" width="1" height="1"/>
<rect x="253" y="140" width="1" height="1"/>
<rect x="263" y="140" width="1" height="1"/>
<rect x="283" y="140" width="1" height="1"/>
<rect x="293" y="140" width="1" height="1"/>
<rect x="303" y="140" width="1" height="1"/>
<rect x="313" y="140" width="1" height="1"/>
<rect x="323" y="140" width="1" height="1"/>
<rect x="333" y="140" width="1" height="1"/>
<rect x="343" y="140" width="1" height="1"/>
<rect x="353" y="140" width="1" height="1"/>
<rect x="363" y="140" width="1" height="1"/>
<rect x="373" y="140" width="1" height="1"/>
<rect x="383" y="140" width="1" height="1"/>
<rect x="393" y="140" width="1" height="1"/>
<rect x="403" y="140" width="1" height="1"/>
<rect x="413" y="140" width="1" height="1"/>
<rect x="423" y="140" width="1" height="1"/>
<rect x="433" y="140" width="1" height="1"/>
<rect x="443" y="140" width="1" height="1"/>
<rect x="453" y="140" width="1" height="1"/>
<rect x="463" y="140" width="1" height="1"/>
<rect x="473" y="140" width="1" height="1"/>
<rect x="483" y="140" width="1" height="1"/>
<rect x="493" y="140" width="1" height="1"/>
<rect x="503" y="140" width="1" height="1"/>
<rect x="513" y="140" width="1" height="1"/>
<rect x="33" y="190" width="1" height="1"/>
<rect x="43" y="190" width="1" height="1"/>
<rect x="53" y="190" width="1" height="1"/>
<rect x="63" y="190" width="1" height="1"/>
<rect x="73" y="190" width="1" height="1"/>
<rect x="83" y="190" width="1" height="1"/>
<rect x="93" y="190" width="1" height="1"/>
<rect x="103" y="190" width="1" height="1"/>
<rect x="113" y="190" width="1" height="1"/>
<rect x="123" y="190" width="1" height="1"/>
<rect x="133" y="190" width="1" height="1"/>
<rect x="143" y="190" width="1" height="1"/>
<rect x="153" y="190" width="1" height="1"/>
<rect x="163" y="190" width="1" height="1"/>
<rect x="173" y="190" width="1" height="1"/>
<rect x="183" y="190" width="1" height="1"/>
<rect x="193" y="190" width="1" height="1"/>
<rect x="203" y="190" width="1" height="1"/>
<rect x="213" y="190" width="1" height="1"/>
<rect x="223" y="190" width="1" height="1"/>
<rect x="233" y="190" width="1" height="1"/>
<rect x="243" y="190" width="1" height="1"/>
<rect x="253" y="190" width="1" height="1"/>
<rect x="263" y="190" width="1" height="1"/>
<rect x="283" y="190" width="1" height="1"/>
<rect x="293" y="190" width="1" height="1"/>
<rect x="303" y="190" width="1" height="1"/>
<rect x="313" y="190" width="1" height="1"/>
<rect x="323" y="190" width="1" height="1"/>
<rect x="333" y="190" width="1" height="1"/>
<rect x="343" y="190" width="1" height="1"/>
<rect x="353" y="190" width="1" height="1"/>
<rect x="363" y="190" width="1" height="1"/>
<rect x="373" y="190" width="1" height="1"/>
<rect x="383" y="190" width="1" height="1"/>
<rect x="393" y="190" width="1" height="1"/>
<rect x="403" y="190" width="1" height="1"/>
<rect x="413" y="190" width="1" height="1"/>
<rect x="423" y="190" width="1" height="1"/>
<rect x="433" y="190" width="1" height="1"/>
<rect x="443" y="190" width="1" height="1"/>
<rect x="453" y="190" width="1" height="1"/>
<rect x="463" y="190" width="1" height="1"/>
<rect x="473" y="190" width="1" height="1"/>
<rect x="483" y="190" width="1" height="1"/>
<rect x="493" y="190" width="1" height="1"/>
<rect x="503" y="190" width="1" height="1"/>
<rect x="513" y="190" width="1" height="1"/>
<rect x="33" y="290" width="1" height="1"/>
<rect x="43" y="290" width="1" height="1"/>
<rect x="53" y="290" width="1" height="1"/>
<rect x="63" y="290" width="1" height="1"/>
<rect x="73" y="290" width="1" height="1"/>
<rect x="83" y="290" width="1" height="1"/>
<rect x="93" y="290" width="1" height="1"/>
<rect x="103" y="290" width="1" height="1"/>
<rect x="113" y="290" width="1" height="1"/>
<rect x="123" y="290" width="1" height="1"/>
<rect x="133" y="290" width="1" height="1"/>
<rect x="143" y="290" width="1" height="1"/>
<rect x="153" y="290" width="1" height="1"/>
<rect x="163" y="290" width="1" height="1"/>
<rect x="173" y="290" width="1" height="1"/>
<rect x="183" y="290" width="1" height="1"/>
<rect x="193" y="290" width="1" height="1"/>
<rect x="203" y="290" width="1" height="1"/>
<rect x="213" y="290" width="1" height="1"/>
<rect x="223" y="290" width="1" height="1"/>
<rect x="233" y="290" width="1" height="1"/>
<rect x="243" y="290" width="1" height="1"/>
<rect x="253" y="290" width="1" height="1"/>
<rect x="263" y="290" width="1" height="1"/>
<rect x="283" y="290" width="1" height="1"/>
<rect x="293" y="290" width="1" height="1"/>
<rect x="303" y="290" width="1" height="1"/>
<rect x="313" y="290" width="1" height="1"/>
<rect x="323" y="290" width="1" height="1"/>
<rect x="333" y="290" width="1" height="1"/>
<rect x="343" y="290" width="1" height="1"/>
<rect x="353" y="290" width="1" height="1"/>
<rect x="363" y="290" width="1" height="1"/>
<rect x="373" y="290" width="1" height="1"/>
<rect x="383" y="290" width="1" height="1"/>
<rect x="393" y="290" width="1" height="1"/>
<rect x="403" y="290" width="1" height="1"/>
<rect x="413" y="290" width="1" height="1"/>
<rect x="423" y="290" width="1" height="1"/>
<rect x="433" y="290" width="1" height="1"/>
<rect x="443" y="290" width="1" height="1"/>
<rect x="453" y="290" width="1" height="1"/>
<rect x="463" y="290" width="1" height="1"/>
<rect x="473" y="290" width="1" height="1"/>
<rect x="483" y="290" width="1" height="1"/>
<rect x="493" y="290" width="1" height="1"/>
<rect x="503" y="290" width="1" height="1"/>
<rect x="513" y="290" width="1" height="1"/>
<rect x="33" y="340" width="1" height="1"/>
<rect x="43" y="340" width="1" height="1"/>
<rect x="53" y="340" width="1" height="1"/>
<rect x="63" y="340" width="1" height="1"/>
<rect x="73" y="340" width="1" height="1"/>
<rect x="83" y="340" width="1" height="1"/>
<rect x="93" y="340" width="1" height="1"/>
<rect x="103" y="340" width="1" height="1"/>
<rect x="113" y="340" width="1" height="1"/>
<rect x="123" y="340" width="1" height="1"/>
<rect x="133" y="340" width="1" height="1"/>
<rect x="143" y="340" width="1" height="1"/>
<rect x="153" y="340" width="1" height="1"/>
<rect x="163" y="340" width="1" height="1"/>
<rect x="173" y="340" width="1" height="1"/>
<rect x="183" y="340" width="1" height="1"/>
<rect x="193" y="340" width="1" height="1"/>
<rect x="203" y="340" width="1" height="1"/>
<rect x="213" y="340" width="1" height="1"/>
<rect x="223" y="340" width="1" height="1"/>
<rect x="233" y="340" width="1" height="1"/>
<rect x="243" y="340" width="1" height="1"/>
<rect x="253" y="340" width="1" height="1"/>
<rect x="263" y="340" width="1" height="1"/>
<rect x="283" y="340" width="1" height="1"/>
<rect x="293" y="340" width="1" height="1"/>
<rect x="303" y="340" width="1" height="1"/>
<rect x="313" y="340" width="1" height="1"/>
<rect x="323" y="340" width="1" height="1"/>
<rect x="333" y="340" width="1" height="1"/>
<rect x="343" y="340" width="1" height="1"/>
<rect x="353" y="340" width="1" height="1"/>
<rect x="363" y="340" width="1" height="1"/>
<rect x="373" y="340" width="1" height="1"/>
<rect x="383" y="340" width="1" height="1"/>
<rect x="393" y="340" width="1" height="1"/>
<rect x="403" y="340" width="1" height="1"/>
<rect x="413" y="340" width="1" height="1"/>
<rect x="423" y="340" width="1" height="1"/>
<rect x="433" y="340" width="1" height="1"/>
<rect x="443" y="340" width="1" height="1"/>
<rect x="453" y="340" width="1" height="1"/>
<rect x="463" y="340" width="1" height="1"/>
<rect x="473" y="340" width="1" height="1"/>
<rect x="483" y="340" width="1" height="1"/>
<rect x="493" y="340" width="1" height="1"/>
<rect x="503" y="340" width="1" height="1"/>
<rect x="513" y="340" width="1" height="1"/>
<rect x="33" y="390" width="1" height="1"/>
<rect x="43" y="390" width="1" height="1"/>
<rect x="53" y="390" width="1" height="1"/>
<rect x="63" y="390" width="1" height="1"/>
<rect x="73" y="390" width="1" height="1"/>
<rect x="83" y="390" width="1" height="1"/>
<rect x="93" y="390" width="1" height="1"/>
<rect x="103" y="390" width="1" height="1"/>
<rect x="113" y="390" width="1" height="1"/>
<rect x="123" y="390" width="1" height="1"/>
<rect x="133" y="390" width="1" height="1"/>
<rect x="143" y="390" width="1" height="1"/>
<rect x="153" y="390" width="1" height="1"/>
<rect x="163" y="390" width="1" height="1"/>
<rect x="173" y="390" width="1" height="1"/>
<rect x="183" y="390" width="1" height="1"/>
<rect x="193" y="390" width="1" height="1"/>
<rect x="203" y="390" width="1" height="1"/>
<rect x="213" y="390" width="1" height="1"/>
<rect x="223" y="390" width="1" height="1"/>
<rect x="233" y="390" width="1" height="1"/>
<rect x="243" y="390" width="1" height="1"/>
<rect x="253" y="390" width="1" height="1"/>
<rect x="263" y="390" width="1" height="1"/>
<rect x="283" y="390" width="1" height="1"/>
<rect x="293" y="390" width="1" height="1"/>
<rect x="303" y="390" width="1" height="1"/>
<rect x="313" y="390" width="1" height="1"/>
<rect x="323" y="390" width="1" height="1"/>
<rect x="333" y="390" width="1" height="1"/>
<rect x="343" y="390" width="1" height="1"/>
<rect x="353" y="390" width="1" height="1"/>
<rect x="363" y="390" width="1" height="1"/>
<rect x="373" y="390" width="1" height="1"/>
<rect x="383" y="390" width="1" height="1"/>
<rect x="393" y="390" width="1" height="1"/>
<rect x="403" y="390" width="1" height="1"/>
<rect x="413" y="390" width="1" height="1"/>
<rect x="423" y="390" width="1" height="1"/>
<rect x="433" y="390" width="1" height="1"/>
<rect x="443" y="390" width="1" height="1"/>
<rect x="453" y="390" width="1" height="1"/>
<rect x="463" y="390" width="1" height="1"/>
<rect x="473" y="390" width="1" height="1"/>
<rect x="483" y="390" width="1" height="1"/>
<rect x="493" y="390" width="1" height="1"/>
<rect x="503" y="390" width="1" height="1"/>
<rect x="513" y="390" width="1" height="1"/>
 </g>
 <g fill="#ffff00">
  <rect x="226" y="43" width="1" height="395"/>
  <rect x="499" y="43" width="1" height="395"/>
  <rect x="43" y="223" width="461" height="1"/>
  <rect x="43" y="392" width="461" height="1"/>
 </g>
</svg>
<svg class="a" style="left:0;top:0" width="640" height="480" shape-rendering="crispEdges">
 <polygon points="221,40 232,40 226.5,46" fill="#ff6a2a"/>
 <g fill="#ffff00"><rect x="510" y="255" width="12" height="1"/><rect x="511" y="254" width="1" height="3"/><rect x="512" y="253" width="1" height="5"/><rect x="513" y="252" width="1" height="7"/></g>
 <g fill="#ff00ff"><rect x="2" y="386" width="21" height="14"/></g>
 <g fill="#000"><rect x="10" y="390" width="1" height="1"/><rect x="11" y="390" width="1" height="1"/><rect x="9" y="391" width="1" height="1"/><rect x="12" y="391" width="1" height="1"/><rect x="9" y="392" width="1" height="1"/><rect x="12" y="392" width="1" height="1"/><rect x="12" y="393" width="1" height="1"/><rect x="10" y="394" width="1" height="1"/><rect x="11" y="394" width="1" height="1"/><rect x="12" y="395" width="1" height="1"/><rect x="9" y="396" width="1" height="1"/><rect x="12" y="396" width="1" height="1"/><rect x="9" y="397" width="1" height="1"/><rect x="12" y="397" width="1" height="1"/><rect x="10" y="398" width="1" height="1"/><rect x="11" y="398" width="1" height="1"/><rect x="16" y="393" width="7" height="1"/><rect x="19" y="391" width="1" height="5"/><rect x="20" y="392" width="2" height="3"/></g>
 <g fill="#00ffff"><rect x="10" y="337" width="1" height="1"/><rect x="11" y="337" width="1" height="1"/><rect x="9" y="338" width="1" height="1"/><rect x="12" y="338" width="1" height="1"/><rect x="9" y="339" width="1" height="1"/><rect x="12" y="339" width="1" height="1"/><rect x="12" y="340" width="1" height="1"/><rect x="11" y="341" width="1" height="1"/><rect x="11" y="342" width="1" height="1"/><rect x="10" y="343" width="1" height="1"/><rect x="9" y="344" width="1" height="1"/><rect x="9" y="345" width="1" height="1"/><rect x="10" y="345" width="1" height="1"/><rect x="11" y="345" width="1" height="1"/><rect x="12" y="345" width="1" height="1"/><rect x="16" y="340" width="7" height="1"/><rect x="19" y="338" width="1" height="5"/><rect x="20" y="339" width="2" height="3"/></g>
</svg>

<div class="a y" style="left:139px;top:95px;font-size:10.5px;filter:url(#crisp)">vout</div>
<div class="a c" style="left:122px;top:252px;font-size:11px;filter:url(#crisp)">hg</div>
<div class="a m" style="left:300px;top:365px;font-size:11px;filter:url(#crisp)">lg</div>

<!-- cursor readouts -->
<div class="a y ro" style="left:530px;top:160px;width:34px;text-align:right">t1 :<br>t2 :<br>&Delta;t :<br>1/&Delta;t :<br>V1 :<br>V2 :<br>&Delta;V :<br>&Delta;V/&Delta;t :</div>
<div class="a y ro" style="left:580px;top:160px">-16.0µs</div>
<div class="a y ro" style="left:584px;top:171px">21.8ms</div>
<div class="a y ro" style="left:584px;top:182px">21.82ms</div>
<div class="a y ro" style="left:584px;top:193px">45.84Hz</div>
<div class="a y ro" style="left:578px;top:204px">676.0mV</div>
<div class="a y ro" style="left:590px;top:215px">0.0V</div>
<div class="a y ro" style="left:574px;top:226px">-676.0mV</div>
<div class="a y ro" style="left:580px;top:237px">-30.99V/s</div>

<div class="a" style="left:526px;top:255px;width:113px;height:1px;background:#e0e0e0"></div>
<div class="a y ro" style="left:526px;top:259px">Max(C1)</div>
<div class="a y ro" style="left:592px;top:259px">1.288V</div>
<div class="a" style="left:526px;top:302px;width:113px;height:1px;background:#e0e0e0"></div>
<div class="a c ro" style="left:526px;top:306px">High(C2)</div>
<div class="a c ro" style="left:592px;top:306px">24.75V</div>
<div class="a c ro" style="left:526px;top:319px;width:113px;text-align:center">Unstable</div>
<div class="a c ro" style="left:526px;top:334px;width:113px;text-align:center">histogram</div>
<div class="a" style="left:526px;top:349px;width:113px;height:1px;background:#e0e0e0"></div>
<div class="a m ro" style="left:526px;top:353px">High(C3)</div>
<div class="a m ro" style="left:592px;top:353px">5.094V</div>

<!-- bottom readouts -->
<div class="a y ro" style="left:24px;top:445px">Ch1</div>
<div class="a y ro" style="left:64px;top:445px">200mV</div>
<div class="a y" style="left:122px;top:445px;font-size:8.5px;line-height:8px">B</div><div class="a y" style="left:127px;top:445px;font-size:11px;line-height:11px">w</div>
<div class="a c ro" style="left:174px;top:445px">Ch2</div>
<div class="a c ro" style="left:214px;top:445px">20.0V</div>
<div class="a c" style="left:272px;top:445px;font-size:8.5px;line-height:8px">B</div><div class="a c" style="left:277px;top:445px;font-size:11px;line-height:11px">w</div>
<div class="a m ro" style="left:24px;top:457px">Ch3</div>
<div class="a m ro" style="left:64px;top:457px">5.0V</div>
<div class="a m" style="left:122px;top:457px;font-size:8.5px;line-height:8px">B</div><div class="a m" style="left:127px;top:457px;font-size:11px;line-height:11px">w</div>
<div class="a w ro" style="left:324px;top:445px">M 4.0ms 25.0MS/s</div>
<div class="a w ro" style="left:433px;top:445px">40.0ns/pt</div>
<div class="a w ro" style="left:324px;top:457px">A</div>
<div class="a y ro" style="left:336px;top:457px">Ch1</div>
<svg class="a" style="left:0;top:0" width="640" height="480" shape-rendering="crispEdges"><g fill="#e8e8e8"><rect x="362" y="460" width="2" height="1"/><rect x="364" y="461" width="1" height="1"/><rect x="365" y="462" width="1" height="2"/><rect x="366" y="464" width="1" height="1"/><rect x="366" y="465" width="2" height="1"/></g></svg>
<div class="a w ro" style="left:375px;top:457px">548mV</div>
</body></html>
